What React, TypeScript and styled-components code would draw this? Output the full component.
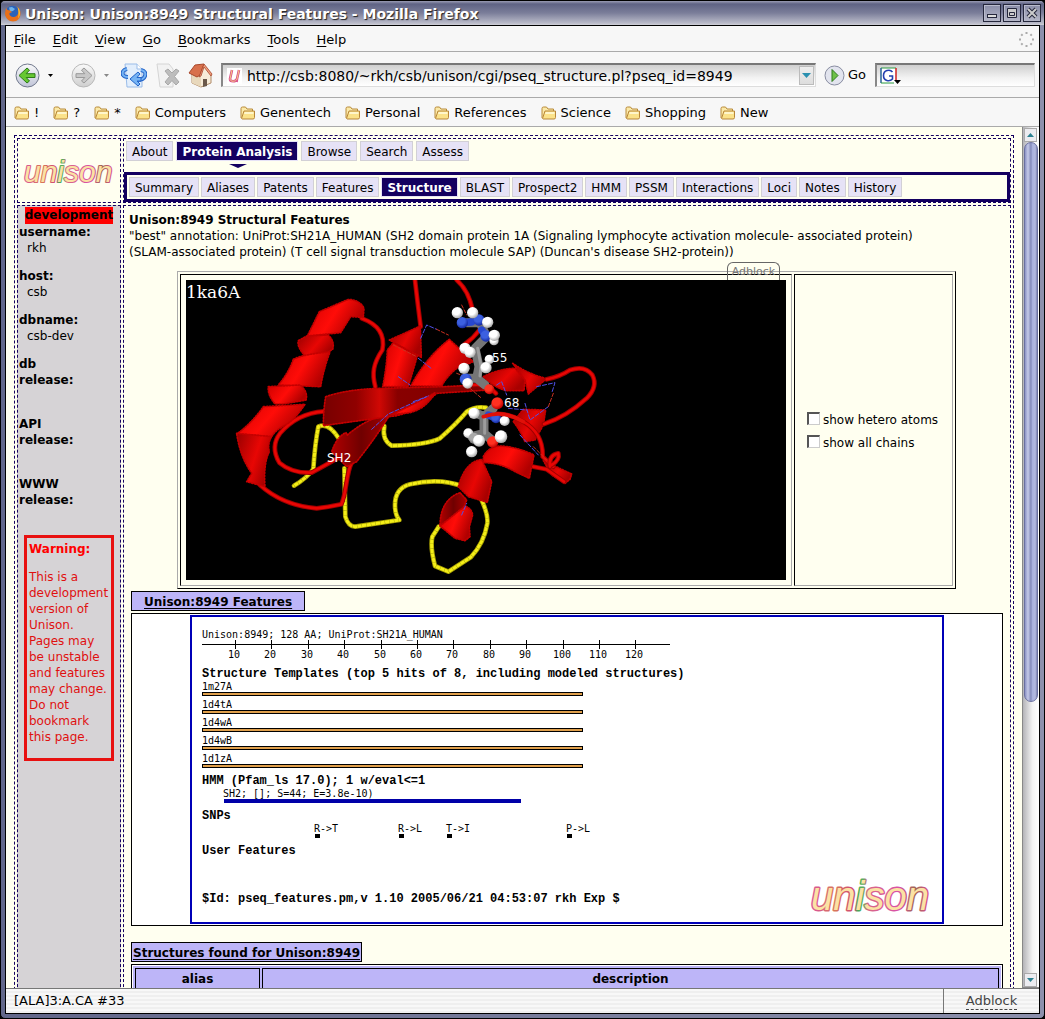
import React from "react";
import styled, { createGlobalStyle, css } from "styled-components";

const NAVY = "#140060";
const CREAM = "#fffff0";
const LAVENDER = "#bdb5f8";
const SANS = '"DejaVu Sans", Verdana, sans-serif';
const MONO = '"DejaVu Sans Mono", "Liberation Mono", monospace';

const GlobalStyle = createGlobalStyle`
  *, *::before, *::after { box-sizing: border-box; }
  body { margin: 0; background: #000; font: 12px/16px ${SANS}; color: #000; }
  button, input { font: inherit; color: inherit; }
  button { border: 0; padding: 0; background: none; }
  a { color: inherit; text-decoration: none; }
  p, h1, h2, dl, dd, ul { margin: 0; padding: 0; }
  svg { display: block; flex: none; }
`;

/* ---------- window chrome ---------- */

const Window = styled.div`
  display: flex;
  flex-direction: column;
  height: 100vh;
  padding: 0 4px 4px;
  border: 1px solid #000;
  border-radius: 5px;
  background: linear-gradient(90deg, #62678a, #8c90ac);
  overflow: hidden;
`;

const TitleBar = styled.header`
  display: flex;
  align-items: center;
  flex: none;
  height: 24px;
  margin: 0 -4px;
  padding: 0 3px;
  gap: 4px;
  background: linear-gradient(#9a9cb4 0, #5f6384 3px, #7b7e9a 50%, #b9bac8 92%, #d0d0d8);
`;

const WindowTitle = styled.h1`
  flex: 1;
  padding-top: 2px;
  font-size: 14px;
  line-height: 20px;
  color: #fff;
  text-shadow: 1px 1px 1px #222;
`;

const TitleButton = styled.button`
  width: 18px;
  height: 18px;
  display: grid;
  place-items: center;
  border: 1px solid #25273c;
  box-shadow: inset 1px 1px #b9bbcc;
  background: linear-gradient(#8a8da8, #b5b7c8);
  & + & { margin-left: -2px; }
`;

const Inner = styled.div`
  flex: 1;
  min-height: 0;
  display: flex;
  flex-direction: column;
  border: 1px solid #000;
  background: #f7f7f7;
`;

const Bar = styled.div<{ $h: number }>`
  display: flex;
  align-items: center;
  flex: none;
  height: ${(p) => p.$h}px;
  padding: 2px 8px 0;
  font-size: 13px;
  border-bottom: 1px solid #aaa;
`;

const MenuBar = styled(Bar)`
  gap: 17px;
  padding-right: 5px;
`;

const Mnemonic = styled.span`
  text-decoration: underline;
  text-underline-offset: 2px;
`;

const Spacer = styled.span`
  flex: 1;
`;

const ToolBar = styled(Bar)`
  padding: 1px 4px 0 9px;
`;

const IconButton = styled.button<{ $gap: number }>`
  display: flex;
  align-items: center;
  gap: 8px;
  margin-right: ${(p) => p.$gap}px;
`;

const FieldBox = styled.label<{ $grow?: boolean }>`
  display: flex;
  align-items: center;
  height: 24px;
  border: 1px solid #ddd;
  border-top: 2px solid #777;
  border-left: 2px solid #888;
  background: linear-gradient(#cfcfcf, #f2f2f2 60%, #fff);
  ${(p) => (p.$grow ? css`flex: 1; padding: 0 1px 0 4px;` : css`width: 160px; padding: 0 2px 0 3px;`)}
`;

const Field = styled.input`
  flex: 1;
  min-width: 0;
  border: 0;
  padding: 0 0 0 5px;
  background: none;
  outline: 0;
  font-size: 14px;
`;

const DropButton = styled.button`
  width: 15px;
  height: 19px;
  display: grid;
  place-items: center;
  border: 1px solid #bbb;
  background: linear-gradient(#eee, #ddd);
`;

const GoButton = styled.button`
  display: flex;
  align-items: center;
  gap: 3px;
  margin: 0 9px 0 8px;
`;

const BookmarkBar = styled(Bar)`
  gap: 14px;
`;

const Bookmark = styled.button`
  display: flex;
  align-items: center;
  gap: 5px;
`;

const Viewport = styled.div`
  flex: 1;
  min-height: 0;
  display: flex;
  background: ${CREAM};
`;

const PageScroll = styled.div`
  flex: 1;
  min-width: 0;
  overflow: hidden;
  padding: 8px 8px 0;
`;

const ScrollTrack = styled.div`
  display: flex;
  flex-direction: column;
  width: 17px;
  padding: 1px 1px 0;
  border-left: 1px solid #888;
  border-bottom: 1px solid #888;
  background: linear-gradient(90deg, #b4b4b8, #f4f4f4 60%, #fff);
`;

const ScrollButton = styled.button`
  width: 13px;
  height: 14px;
  display: grid;
  place-items: center;
  border: 1px solid #aaa;
  background: #ececf0;
`;

const ScrollThumb = styled.div`
  height: 560px;
  border: 1px solid #6a70a0;
  border-radius: 7px;
  background: linear-gradient(90deg, #8c92c4, #c5cae8 25%, #8087b8 50%, #a8b0dc 60%, #b4bae0 85%, #7c82b0);
`;

const StatusBar = styled.footer`
  display: flex;
  flex: none;
  height: 25px;
  border-top: 1px solid #777;
  font-size: 13px;
  line-height: 24px;
  background: repeating-linear-gradient(#f8f8f8 0 2px, #efefef 2px 4px);
`;

const StatusText = styled.span`
  flex: 1;
  padding-left: 8px;
`;

const StatusCell = styled.span`
  width: 96px;
  border-left: 1px solid #777;
  text-align: center;
  color: #444;
  & > button { line-height: 17px; border-bottom: 1px dashed #444; }
`;

/* ---------- page frame ---------- */

const Frame = styled.div`
  display: grid;
  grid-template-columns: 104px 1fr;
  grid-template-rows: 65px auto;
  gap: 2px;
  min-height: 900px;
  padding: 2px;
  border: 1px dashed ${NAVY};
`;

const LogoCell = styled.div`
  display: grid;
  place-items: center;
  border: 1px dashed ${NAVY};
`;

const NavCell = styled.nav`
  display: flex;
  flex-direction: column;
  border: 1px dashed ${NAVY};
`;

const TabRow = styled.div`
  display: flex;
  gap: 3px;
  padding: 2px 2px 0;
`;

const Pointer = styled.span`
  display: block;
  width: 0;
  margin: 3px 0 4px 105px;
  border: solid transparent;
  border-width: 4px 9px 0;
  border-top-color: ${NAVY};
`;

const SubRow = styled.div`
  display: flex;
  gap: 2px;
  padding: 2px;
  border: 3px solid ${NAVY};
`;

const Tab = styled.a<{ $active?: boolean }>`
  height: 20px;
  padding: 2px 5px 0;
  border: 1px solid #d2d0d6;
  background: #e6e2f6;
  white-space: nowrap;
  ${(p) => p.$active && css`
    color: #fff;
    font-weight: bold;
    background: ${NAVY};
    border-color: #e6e2f6;
  `}
`;

const Sidebar = styled.aside`
  border: 1px dashed ${NAVY};
  padding: 1px;
  background: #d6d3d6;
`;

const DevBadge = styled.div`
  width: max-content;
  margin: 0 auto;
  background: #f00;
  font-weight: bold;
  line-height: 17px;
`;

const InfoList = styled.dl`
  & > dt { font-weight: bold; width: 60px; }
  & > dd { padding-left: 8px; min-height: 16px; margin-bottom: 12px; }
`;

const Warning = styled.section`
  margin: -1px 5px 0;
  padding: 3px 0 13px 2px;
  border: 3px solid #e81010;
  color: #e01010;
  & > h2 { font-size: 12px; line-height: 16px; color: #f00; margin-bottom: 12px; }
`;

const Main = styled.main`
  min-width: 0;
  border: 1px dashed ${NAVY};
  padding: 6px 6px 5px 5px;
`;

const PageHeading = styled.h2`
  font-size: 12px;
  line-height: 16px;
`;

const Viewer = styled.div`
  position: relative;
  display: flex;
  gap: 2px;
  width: max-content;
  margin: 11px auto 2px;
  padding: 2px;
  border: 1px solid #000;
  border-top-color: #aaa;
  border-left-color: #aaa;
`;

const ViewerCell = styled.div`
  padding: 5px;
  border: 1px solid #aaa;
  border-top-color: #000;
  border-left-color: #000;
`;

const OptionCell = styled(ViewerCell)`
  display: flex;
  flex-direction: column;
  justify-content: center;
  gap: 7px;
  width: 159px;
  padding-top: 8px;
  padding-left: 12px;
`;

const Option = styled.label`
  display: flex;
  align-items: center;
  gap: 3px;
  white-space: nowrap;
`;

const Check = styled.input`
  appearance: none;
  width: 13px;
  height: 13px;
  margin: 0 0 3px;
  border: 1px solid #ccc;
  border-top: 2px solid #555;
  border-left: 2px solid #555;
  background: #fff;
`;

const AdblockTab = styled.button`
  position: absolute;
  right: 175px;
  top: -10px;
  width: 53px;
  height: 18px;
  padding-top: 1px;
  border: 1px solid #666;
  border-bottom: 0;
  border-radius: 6px 6px 0 0;
  font-size: 11px;
  color: #777;
`;

const SectionTab = styled.h2<{ $wide?: boolean }>`
  width: max-content;
  height: 20px;
  margin: 0 2px 2px;
  padding: 1px ${(p) => (p.$wide ? 12 : 1)}px;
  border: 1px solid #000;
  background: ${LAVENDER};
  font-size: 12px;
  line-height: 18px;
  text-decoration: underline;
  text-underline-offset: 2px;
`;

const FeaturePanel = styled.div`
  margin: 0 1px 16px 2px;
  padding: 1px;
  border: 1px solid #000;
  background: #fff;
`;

const FeatureFrame = styled.div`
  width: max-content;
  margin: 0 auto;
  border: 2px solid #0000b8;
`;

const ResultTable = styled.table`
  width: calc(100% - 3px);
  margin: 0 1px 0 2px;
  border: 1px solid #000;
  border-spacing: 2px;
  background: ${LAVENDER};
  box-shadow: inset 0 0 0 1px #fff;
  padding: 1px;
  & th { height: 21px; padding: 1px; border: 1px solid #000; font-weight: bold; }
  & th:first-child { width: 125px; }
`;

/* ---------- drawings ---------- */

const Logo = ({ size, id }: { size: number; id: string }) => (
  <>
    <defs>
      <linearGradient id={id} x1="0" y1="0" x2="1" y2="0">
        <stop offset="0" stopColor="#d850a0" />
        <stop offset=".2" stopColor="#d87858" />
        <stop offset=".36" stopColor="#d04878" />
        <stop offset=".4" stopColor="#48a858" />
        <stop offset=".44" stopColor="#58b060" />
        <stop offset=".48" stopColor="#d86888" />
        <stop offset=".75" stopColor="#d850a8" />
        <stop offset=".88" stopColor="#a06850" />
        <stop offset="1" stopColor="#d85090" />
      </linearGradient>
    </defs>
    <text
      fontFamily="Liberation Sans, Arial, sans-serif"
      fontStyle="italic"
      fontSize={size}
      fill="#fbe2a4"
      stroke={`url(#${id})`}
      strokeWidth={size / 14}
      strokeLinejoin="round"
      paintOrder="stroke"
    >
      unison
    </text>
  </>
);

const Firefox = () => (
  <svg width="17" height="17" viewBox="0 0 17 17">
    <circle cx="8.5" cy="8" r="7.2" fill="#2b62b8" />
    <path d="M5 2.5 8 2l3 2-2 2-3 .5z" fill="#6fb3e8" />
    <path d="M2 3 1 8c0 5 4 8.5 8 8.5 4.500 0 7.500-3.500 7.500-8 0-3-1-5-3-6.500 1 2 1.500 4 .8 6C13.500 11 11 12.500 8.800 12 6.500 11.500 5 10 5.500 8L8 7.200 6 5.500 3.500 5z" fill="#e8701a" />
    <path d="M13.500 2c3 3 3.500 8 .5 11.500 1-4 .5-8-.5-11.500z" fill="#fbc02d" />
  </svg>
);

const Caret = ({ c = "#000" }: { c?: string }) => (
  <svg width="5" height="3" viewBox="0 0 5 3"><path d="M0 0h5L2.500 3z" fill={c} /></svg>
);

const Arrow = ({ forward }: { forward?: boolean }) => (
  <svg width="25" height="25" viewBox="0 0 25 25">
    <defs>
      <linearGradient id={forward ? "disc2" : "disc1"} x1="0" y1="0" x2="0" y2="1">
        <stop offset="0" stopColor="#fafafa" /><stop offset="1" stopColor={forward ? "#cfcfcf" : "#c0c4d8"} />
      </linearGradient>
    </defs>
    <circle cx="12.500" cy="12.500" r="11.500" fill={`url(#${forward ? "disc2" : "disc1"})`} stroke={forward ? "#b8b8b8" : "#70788c"} />
    <path
      transform={forward ? "translate(25 0) scale(-1 1)" : undefined}
      d="M4 12.500 12 5l2.500 2.200-3.300 3.500H20v3.800h-8.800l3.300 3.500L12 20z"
      fill={forward ? "#c8c8c8" : "#66c832"}
      stroke={forward ? "#999" : "#2c7a18"}
    />
  </svg>
);

const Reload = () => (
  <svg width="26" height="25" viewBox="0 0 26 25">
    <path d="M4 1h12l5 5v18H6z" fill="#e2eefc" stroke="#9abce8" />
    <path d="M16 1v5h5" fill="#fff" stroke="#9abce8" />
    <path d="M6 6C2 7 1 9 2 12c1 1.500 3 2 5 2M20 7c4 1 5 3 4 6-1 3-4 4-8 4" fill="none" stroke="#2464c8" strokeWidth="4" />
    <path d="M6 6C2 7 1 9 2 12c1 1.500 3 2 5 2M20 7c4 1 5 3 4 6-1 3-4 4-8 4" fill="none" stroke="#76b4f4" strokeWidth="2" />
    <path d="m9 16 8-7 2 2-3 3.500h4V18h-4l3 3-2 2z" fill="#76b4f4" stroke="#2464c8" />
  </svg>
);

const Stop = () => (
  <svg width="26" height="25" viewBox="0 0 26 25">
    <path d="M2 1h12l4 5v18H5z" fill="#f2f2f2" stroke="#d4d4d4" />
    <path d="m10 8 3-2 4 4 4-4 3 2-4.500 5.500L24 19l-3 3-4-4.500-4 4.500-3-3 4.500-5.500z" fill="#bdbdbd" stroke="#a8a8a8" />
  </svg>
);

const Home = () => (
  <svg width="25" height="25" viewBox="0 0 25 25">
    <path d="M4 10v10l9 4 10-4V11l-6-8z" fill="#f7ecd8" stroke="#b08a68" />
    <path d="M13 13v11L4 20V11z" fill="#e8d8bc" />
    <path d="M15 16h4v7l-4 1z" fill="#6a584a" />
    <path d="M1 10 7 2l9-1-4 11-3 2z" fill="#d8704c" stroke="#a8482c" />
    <path d="m16 1 8 10-1 2-7-9-3 9-2 1z" fill="#f0a080" stroke="#a8482c" strokeWidth=".8" />
  </svg>
);

const GoIcon = () => (
  <svg width="21" height="21" viewBox="0 0 21 21">
    <circle cx="10.500" cy="10.500" r="9.500" fill="#e2e4ee" stroke="#888ca0" />
    <path d="M8 4.500v12l6-6z" fill="#6cc048" stroke="#2e7a1c" />
  </svg>
);

const FavIcon = () => (
  <svg width="15" height="16" viewBox="0 0 15 16">
    <path d="M0 0h15v16H0z" fill="#fff" />
    <path d="M5 2 3 11c0 3 6 3 7 0l2-9M10 11l-.5 3" fill="none" stroke="#d8508c" strokeWidth="2.600" />
    <path d="M5 2 3 11c0 3 6 3 7 0l2-9" fill="none" stroke="#f8c880" />
  </svg>
);

const GoogleIcon = () => (
  <svg width="22" height="18" viewBox="0 0 22 18">
    <path d="M1 1h15v15H1z" fill="#fff" />
    <path d="M1 16V1h15" fill="none" stroke="#2a9a40" /><path d="M1 1v15" stroke="#2848c0" />
    <path d="M16 1v12" stroke="#d02020" strokeWidth="1.500" /><path d="M1 16h13" stroke="#2a9a40" />
    <path d="M12.500 5C10 1.800 3.500 3 3.500 8.500S9.500 15 12.500 12V9H9" fill="none" stroke="#2440b0" strokeWidth="1.600" />
    <path d="M14 13h7l-3.500 4z" fill="#000" />
  </svg>
);

const Folder = () => (
  <svg width="15" height="14" viewBox="0 0 15 14">
    <path d="M1 12V2.500Q1 1 2.500 1h3L7 3h5.500v2" fill="#fbe9a8" stroke="#b88a38" />
    <path d="M1.500 12.500 4 5h10.500v6.500q0 1.500-1.500 1.500H2z" fill="#fbe28a" stroke="#b8863a" />
    <path d="M4.700 6h8.800v2H4z" fill="#fff6cc" />
  </svg>
);

const Throbber = () => (
  <svg width="15" height="15" viewBox="0 0 15 15">
    {[0, 45, 90, 135, 180, 225, 270, 315].map((a) => (
      <path key={a} d="M6.500 0h2v2h-2z" fill="#aaa" transform={`rotate(${a} 7.500 7.500)`} />
    ))}
  </svg>
);

const RED_TUBES = [
  "M545 145C600 165 615 200 607 240C580 280 575 310 586 350",
  "M705 30L712 90L722 170",
  "M830 30Q865 60 878 120M898 180Q880 205 855 222",
  "M432 424Q350 430 300 490Q270 530 298 578Q335 610 395 608Q450 578 480 560",
  "M240 645C290 690 350 710 410 715C440 712 460 708 484 703C500 670 498 610 515 578",
  "M1100 328Q1140 320 1170 300Q1215 285 1237 315Q1255 350 1220 385Q1160 440 1092 462",
  "M905 440Q970 418 1030 455Q1090 490 1088 560L1120 590",
  "M1060 590L1100 598L1152 635M1110 590Q1105 555 1135 550Q1140 570 1115 585",
  "M880 345Q920 340 948 370",
];
const YELLOW_TUBES = [
  "M342 647Q380 625 400 597Q405 520 415 470Q445 455 476 505",
  "M493 595L496 740Q505 770 525 770L658 750Q645 735 645 705Q645 655 690 643Q780 622 850 650Q895 670 905 690Q925 735 922 760Q912 820 872 862L805 905L765 888Q750 830 757 800L776 770",
  "M613 468Q605 510 635 527Q740 525 780 505Q830 460 860 425Q885 408 918 413",
];
const RIBBONS: [string, string][] = [
  ["M418 125L505 88Q540 90 552 115L550 142L512 140L482 188L382 198Z", "rb"],
  ["M380 198L445 195Q465 215 458 238L435 252L375 258Q350 230 355 212Z", "rd"],
  ["M340 268Q370 252 450 246Q430 300 422 350L295 345Q325 310 340 268Z", "rb"],
  ["M265 350L360 345Q385 365 378 390L310 402L285 402Q262 375 265 350Z", "rb"],
  ["M250 410L375 403Q350 440 325 460Q285 480 275 500L170 492Q215 460 250 410Z", "rb"],
  ["M170 490L275 500Q262 520 268 545Q250 580 255 650L200 635L215 610Q180 560 170 490Z", "rd"],
  ["M640 218L712 258L685 350L608 350Q620 290 622 240Z", "rb"],
  ["M721 168L628 210L724 262Z", "rd"],
  ["M808 208L880 275L830 295Q800 320 785 348L692 348Q740 260 808 208Z", "rb"],
  ["M502 495Q560 445 632 430Q590 500 530 575L500 590L455 545Q470 500 498 488Z", "dk"],
  ["M437 380Q500 358 600 355L790 350L910 344L925 360L770 370Q700 435 625 440L430 467Q430 420 437 380Z", "wide"],
  ["M632 434Q700 405 765 368Q740 415 690 428Z", "rb"],
  ["M910 320Q960 295 1005 295L1035 330L1032 362L980 362Q945 355 910 320Z", "rd"],
  ["M998 280Q1040 310 1100 326L1045 372L1035 330Z", "rd"],
  ["M1000 455L1030 418L1097 420L1090 465L1065 510L1035 515Q1020 480 1000 455Z", "rd"],
  ["M910 560Q925 530 960 528Q1010 530 1062 555L1048 625L1005 605Q960 578 910 578Z", "rb"],
  ["M835 650Q855 575 905 568L935 635L922 697L865 680Z", "rd"],
  ["M840 668Q780 690 780 768L840 745L860 690Z", "dk"],
  ["M780 768L855 708Q875 715 878 735L868 770L870 800L855 812L825 805Z", "rb"],
  ["M1090 572L1175 612L1170 628L1155 640L1115 615Z", "rd"],
];
const ATOMS: [number, number, number, string][] = [
  [847, 158, 17, "nb"], [897, 150, 17, "nb"], [918, 198, 17, "nb"], [857, 328, 18, "nb"],
  [832, 128, 17, "wh"], [878, 128, 17, "wh"], [923, 157, 17, "wh"], [942, 212, 14, "wh"], [943, 196, 17, "wh"],
  [855, 235, 17, "wh"], [870, 247, 17, "wh"], [928, 268, 14, "wh"], [918, 293, 17, "wh"], [852, 295, 17, "wh"], [863, 340, 16, "wh"],
  [928, 358, 15, "ox"], [952, 400, 18, "ox"], [938, 516, 17, "ox"],
  [948, 445, 15, "nb"], [974, 453, 15, "wh"], [882, 430, 17, "wh"], [865, 490, 15, "wh"], [883, 505, 17, "gr"],
  [897, 512, 18, "wh"], [875, 545, 17, "wh"], [963, 500, 19, "wh"],
];

const Protein = () => (
  <svg width="600" height="300" role="img" aria-label="1ka6A structure">
    <defs>
      <linearGradient id="rb" x1="0" y1="0" x2="1" y2=".4">
        <stop offset="0" stopColor="#d00000" /><stop offset=".55" stopColor="#ff0c08" /><stop offset="1" stopColor="#b00000" />
      </linearGradient>
      <linearGradient id="rd" x1="0" y1="0" x2="1" y2=".5">
        <stop offset="0" stopColor="#980000" /><stop offset=".6" stopColor="#e80604" /><stop offset="1" stopColor="#a80000" />
      </linearGradient>
      <linearGradient id="dk" x1="0" y1="0" x2="1" y2="0">
        <stop offset="0" stopColor="#b00000" /><stop offset=".5" stopColor="#700000" /><stop offset="1" stopColor="#a80000" />
      </linearGradient>
      <linearGradient id="wide" x1="0" y1="0" x2="1" y2="0">
        <stop offset="0" stopColor="#780000" /><stop offset=".2" stopColor="#900000" /><stop offset=".34" stopColor="#d00804" />
        <stop offset=".45" stopColor="#880000" /><stop offset="1" stopColor="#800000" />
      </linearGradient>
      {[["wh", "#fff", "#a8a8a8"], ["nb", "#3c60e0", "#1428a0"], ["ox", "#ff3020", "#c00000"], ["gr", "#aaa", "#666"]].map(([id, a, b]) => (
        <radialGradient key={id} id={id} cx=".4" cy=".35" r=".65">
          <stop offset=".5" stopColor={a} /><stop offset="1" stopColor={b} />
        </radialGradient>
      ))}
    </defs>
    <rect width="600" height="300" fill="#000" />
    <g transform="translate(-6 -10) scale(.33333)" fill="none" strokeLinecap="round" strokeLinejoin="round">
      {YELLOW_TUBES.map((d) => (
        <g key={d}>
          <path d={d} stroke="#a8a000" strokeWidth="14" />
          <path d={d} stroke="#f4ee18" strokeWidth="9" />
          <path d={d} stroke="#8c8600" strokeWidth="13" strokeDasharray="1 13" strokeLinecap="butt" />
        </g>
      ))}
      {RED_TUBES.slice(0, 5).map((d) => (
        <g key={d}><path d={d} stroke="#a00000" strokeWidth="14" /><path d={d} stroke="#e80604" strokeWidth="8" /></g>
      ))}
      {RIBBONS.map(([d, f]) => (
        <path key={d} d={d} fill={`url(#${f})`} stroke="#c40000" strokeWidth="5" strokeDasharray="4 5" />
      ))}
      {RED_TUBES.slice(5).map((d) => (
        <g key={d}><path d={d} stroke="#a00000" strokeWidth="14" /><path d={d} stroke="#e80604" strokeWidth="8" /></g>
      ))}
      <path d="M722 205L740 165L770 178M715 265L757 298M655 320L690 345M575 478L625 432L745 378M700 395L740 380M1070 350L1125 338L1115 370M1105 410L1050 450L1035 400M950 345L965 335L980 375M1020 495L1075 555M845 735L860 700M985 415L1040 420" stroke="#5050e8" strokeWidth="3" strokeDasharray="12 6" />
      <path d="M770 178L805 195M845 105L860 135M870 355L905 385M1120 370L1105 410M830 310L870 325M1060 530L1100 570M640 225L710 260" stroke="#c83020" strokeWidth="3" strokeDasharray="10 6" />
      <path
        d="M860 158L900 158L920 200L885 235L897 290L890 325M915 345L890 325L860 325M897 290L918 290M940 415L912 440L912 490L935 510M912 440L890 430M912 490L875 500"
        stroke="#767676"
        strokeWidth="27"
      />
      <path d="M893 235L903 288L900 318M914 440L914 490" stroke="#9c9c9c" strokeWidth="9" />
      <path d="M847 158L875 156M918 198L905 180M925 435L950 445" stroke="#2848d0" strokeWidth="22" />
      {ATOMS.map(([x, y, r, f]) => (
        <circle key={`${x}-${y}`} cx={x} cy={y} r={r} fill={`url(#${f})`} />
      ))}
      <path d="M910 440Q970 418 1030 455" stroke="#e01008" strokeWidth="11" />
    </g>
    <text x="0" y="18" fill="#fff" fontSize="17" fontFamily="DejaVu Serif, serif">1ka6A</text>
    <g fill="#fff" fontSize="12" fontFamily="DejaVu Sans, sans-serif">
      <text x="141" y="182">SH2</text><text x="306" y="82">55</text><text x="318" y="127">68</text>
    </g>
  </svg>
);

const TEMPLATES = ["1m27A", "1d4tA", "1d4wA", "1d4wB", "1d1zA"];
const SNPS: [number, string][] = [[315, "R->T"], [399, "R->L"], [447, "T->I"], [567, "P->L"]];
const HEADINGS: [number, string][] = [
  [677, "Structure Templates (top 5 hits of 8, including modeled structures)"],
  [784, "HMM (Pfam_ls 17.0); 1 w/eval<=1"],
  [819, "SNPs"],
  [854, "User Features"],
  [902, "$Id: pseq_features.pm,v 1.10 2005/06/21 04:53:07 rkh Exp $"],
];

const FeatureMap = () => (
  <svg width="750" height="305" viewBox="192 617 750 305" fontFamily={MONO} fontSize="10" shapeRendering="crispEdges">
    <text x="202" y="638">Unison:8949; 128 AA; UniProt:SH21A_HUMAN</text>
    <path d="M202 644.500h468" stroke="#000" />
    {Array.from({ length: 12 }, (_, i) => {
      const x = Math.round(235 + i * 36.4);
      return (
        <g key={x}>
          <path d={`M${x}.5 640v9`} stroke="#000" />
          <text x={x - 1} y="658" textAnchor="middle">{(i + 1) * 10}</text>
        </g>
      );
    })}
    {HEADINGS.map(([y, t]) => (
      <text key={y} x="202" y={y} fontSize="12" fontWeight="bold" fontFamily="Liberation Mono, monospace">{t}</text>
    ))}
    {TEMPLATES.map((t, i) => (
      <g key={t}>
        <text x="202" y={690 + i * 18}>{t}</text>
        <rect x="202.500" y={692.5 + i * 18} width="380" height="3" fill="#e0a04c" stroke="#000" />
      </g>
    ))}
    <text x="223" y="797">SH2; []; S=44; E=3.8e-10)</text>
    <rect x="224" y="799" width="297" height="4" fill="#0000a8" />
    {SNPS.map(([x, t]) => (
      <g key={x}>
        <text x={x - 1} y="832">{t}</text>
        <rect x={x} y="834" width="5" height="4" />
      </g>
    ))}
    <g transform="translate(811 910)" shapeRendering="auto"><Logo size={40} id="logoLarge" /></g>
  </svg>
);

/* ---------- page ---------- */

const MENUS = ["File", "Edit", "View", "Go", "Bookmarks", "Tools", "Help"];
const BOOKMARKS = ["!", "?", "*", "Computers", "Genentech", "Personal", "References", "Science", "Shopping", "New"];
const TABS = ["About", "Protein Analysis", "Browse", "Search", "Assess"];
const SUBTABS = ["Summary", "Aliases", "Patents", "Features", "Structure", "BLAST", "Prospect2", "HMM", "PSSM", "Interactions", "Loci", "Notes", "History"];
const INFO: [string, string][] = [["username:", "rkh"], ["host:", "csb"], ["dbname:", "csb-dev"], ["db release:", ""], ["API release:", ""], ["WWW release:", ""]];

export default function App() {
  return (
    <Window>
      <GlobalStyle />
      <TitleBar>
        <Firefox />
        <WindowTitle>Unison: Unison:8949 Structural Features - Mozilla Firefox</WindowTitle>
        <TitleButton aria-label="Minimize">
          <svg width="12" height="12"><rect x="1.500" y="7.500" width="9" height="3" fill="#ddd" stroke="#25273c" /></svg>
        </TitleButton>
        <TitleButton aria-label="Maximize">
          <svg width="12" height="12"><path d="M1.500 1.500h9v9h-9zM3.500 5.500h5v3h-5z" fill="#ccc" stroke="#25273c" /></svg>
        </TitleButton>
        <TitleButton aria-label="Close">
          <svg width="12" height="12"><path d="m2 2 8 8m0-8-8 8" stroke="#25273c" strokeWidth="4" /><path d="m2 2 8 8m0-8-8 8" stroke="#ccc" strokeWidth="2" /></svg>
        </TitleButton>
      </TitleBar>
      <Inner>
        <MenuBar $h={26}>
          {MENUS.map((m) => (
            <button key={m}><Mnemonic>{m[0]}</Mnemonic>{m.slice(1)}</button>
          ))}
          <Spacer />
          <Throbber />
        </MenuBar>
        <ToolBar $h={46}>
          <IconButton $gap={18} aria-label="Back"><Arrow /><Caret /></IconButton>
          <IconButton $gap={12} aria-label="Forward"><Arrow forward /><Caret c="#888" /></IconButton>
          <IconButton $gap={8} aria-label="Reload"><Reload /></IconButton>
          <IconButton $gap={7} aria-label="Stop"><Stop /></IconButton>
          <IconButton $gap={8} aria-label="Home"><Home /></IconButton>
          <FieldBox $grow>
            <FavIcon />
            <Field aria-label="Location" defaultValue="http://csb:8080/~rkh/csb/unison/cgi/pseq_structure.pl?pseq_id=8949" />
            <DropButton aria-label="Show history"><svg width="9" height="5"><path d="M0 0h9L4.500 5z" fill="#2a90b0" /></svg></DropButton>
          </FieldBox>
          <GoButton><GoIcon />Go</GoButton>
          <FieldBox>
            <GoogleIcon />
            <Field aria-label="Search" />
          </FieldBox>
        </ToolBar>
        <BookmarkBar $h={29}>
          {BOOKMARKS.map((b) => (
            <Bookmark key={b}><Folder />{b}</Bookmark>
          ))}
        </BookmarkBar>
        <Viewport>
          <PageScroll>
            <Frame>
              <LogoCell>
                <svg width="92" height="34" viewBox="0 0 92 34"><g transform="translate(1 28)"><Logo size={30} id="logoSmall" /></g></svg>
              </LogoCell>
              <NavCell>
                <TabRow>
                  {TABS.map((t) => <Tab key={t} href="#" $active={t === "Protein Analysis"}>{t}</Tab>)}
                </TabRow>
                <Pointer />
                <SubRow>
                  {SUBTABS.map((t) => <Tab key={t} href="#" $active={t === "Structure"}>{t}</Tab>)}
                </SubRow>
              </NavCell>
              <Sidebar>
                <DevBadge>development</DevBadge>
                <InfoList>
                  {INFO.map(([k, v]) => (
                    <React.Fragment key={k}><dt>{k}</dt><dd>{v}</dd></React.Fragment>
                  ))}
                </InfoList>
                <Warning>
                  <h2>Warning:</h2>
                  <p>This is a development version of Unison. Pages may be unstable and features may change. Do not bookmark this page.</p>
                </Warning>
              </Sidebar>
              <Main>
                <PageHeading>Unison:8949 Structural Features</PageHeading>
                <p>
                  "best" annotation: UniProt:SH21A_HUMAN (SH2 domain protein 1A (Signaling lymphocyte activation molecule- associated protein)
                  <br />
                  (SLAM-associated protein) (T cell signal transduction molecule SAP) (Duncan's disease SH2-protein))
                </p>
                <Viewer>
                  <ViewerCell><Protein /></ViewerCell>
                  <OptionCell>
                    <Option><Check type="checkbox" />show hetero atoms</Option>
                    <Option><Check type="checkbox" />show all chains</Option>
                  </OptionCell>
                  <AdblockTab>Adblock</AdblockTab>
                </Viewer>
                <SectionTab $wide>Unison:8949 Features</SectionTab>
                <FeaturePanel>
                  <FeatureFrame><FeatureMap /></FeatureFrame>
                </FeaturePanel>
                <SectionTab>Structures found for Unison:8949</SectionTab>
                <ResultTable>
                  <thead><tr><th scope="col">alias</th><th scope="col">description</th></tr></thead>
                </ResultTable>
              </Main>
            </Frame>
          </PageScroll>
          <ScrollTrack>
            <ScrollButton aria-label="Scroll up"><svg width="7" height="4"><path d="M0 4h7L3.500 0z" fill="#2a8090" /></svg></ScrollButton>
            <ScrollThumb />
            <Spacer />
            <ScrollButton aria-label="Scroll down"><svg width="7" height="4"><path d="M0 0h7L3.500 4z" fill="#2a8090" /></svg></ScrollButton>
          </ScrollTrack>
        </Viewport>
        <StatusBar>
          <StatusText>[ALA]3:A.CA #33</StatusText>
          <StatusCell><button>Adblock</button></StatusCell>
        </StatusBar>
      </Inner>
    </Window>
  );
}
